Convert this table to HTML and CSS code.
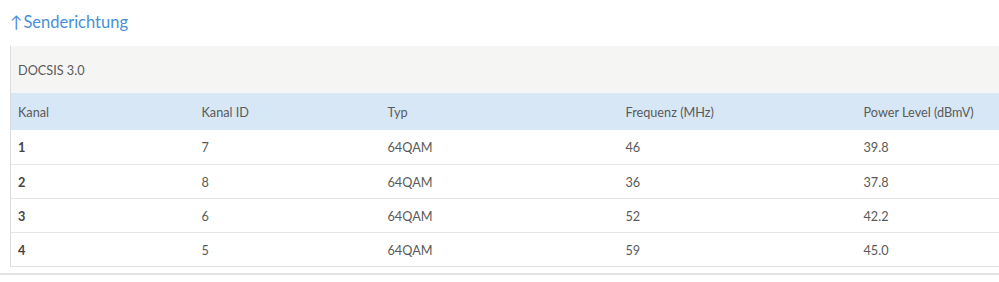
FILE: index.html
```html
<!DOCTYPE html>
<html lang="de">
<head>
<meta charset="utf-8">
<link rel="stylesheet" href="styles.css">
</head>
<body>
<section class="panel">
  <h2 class="title"><span class="arrow">↑</span>Senderichtung</h2>
  <div class="tablewrap">
    <table class="docsis">
      <colgroup>
        <col class="c1"><col class="c2"><col class="c3"><col class="c4"><col class="c5">
      </colgroup>
      <thead>
        <tr class="caption-row"><th colspan="5">DOCSIS 3.0</th></tr>
        <tr class="head-row">
          <th>Kanal</th><th>Kanal ID</th><th>Typ</th><th>Frequenz (MHz)</th><th>Power Level (dBmV)</th>
        </tr>
      </thead>
      <tbody>
        <tr><td class="num">1</td><td>7</td><td>64QAM</td><td>46</td><td>39.8</td></tr>
        <tr><td class="num">2</td><td>8</td><td>64QAM</td><td>36</td><td>37.8</td></tr>
        <tr><td class="num">3</td><td>6</td><td>64QAM</td><td>52</td><td>42.2</td></tr>
        <tr><td class="num">4</td><td>5</td><td>64QAM</td><td>59</td><td>45.0</td></tr>
      </tbody>
    </table>
  </div>
</section>
</body>
</html>
```

FILE: styles.css
```css
html, body {
  margin: 0;
  padding: 0;
  background: #ffffff;
  overflow: hidden;
}
body {
  font-family: "Lato", "Noto Sans", sans-serif;
  color: #5a5a5a;
  width: 999px;
}
.panel {
  padding: 11px 0 6px 10px;
  border-bottom: 2px solid #e2e2e2;
}
.title {
  margin: 0 0 13px 0;
  font-size: 16.5px;
  font-weight: 400;
  line-height: 22px;
  color: #4a8fd8;
}
.arrow {
  display: inline-block;
  margin-right: 1px;
}
.tablewrap {
  width: 989px;
  overflow: hidden;
}
.docsis {
  border-collapse: collapse;
  width: 1100px;
  table-layout: fixed;
  font-size: 12.7px;
  border-left: 1px solid #dcdcdc;
  border-bottom: 1px solid #e0e0e0;
}
.c1 { width: 184px; }
.c2 { width: 186px; }
.c3 { width: 238px; }
.c4 { width: 238px; }
.docsis th, .docsis td {
  text-align: left;
  font-weight: 400;
  padding: 0 0 0 7px;
  white-space: nowrap;
}
.caption-row th {
  background: #f5f5f3;
  height: 47px;
}
.head-row th {
  background: #d7e7f5;
  height: 37px;
}
.docsis td {
  height: 33px;
  border-top: 1px solid #e4e4e4;
}
.docsis tbody tr:first-child td {
  border-top: 0;
  height: 34px;
}
.docsis td.num {
  font-weight: 700;
  color: #444444;
}
```
